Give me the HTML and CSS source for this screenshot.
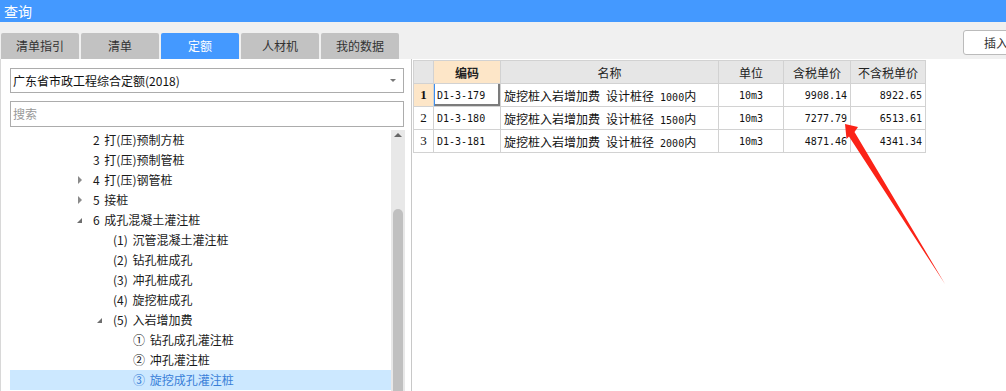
FILE: index.html
```html
<!DOCTYPE html>
<html>
<head>
	<title>查询</title>
	<meta charset="utf-8">
	<link rel="stylesheet" href="styles.css">
</head>
<body>
	<div class="titlebar">查询</div>
	<div class="main">
		<div class="left">
			<div class="tabs">
				<div class="tab">清单指引</div>
				<div class="tab">清单</div>
				<div class="tab on">定额</div>
				<div class="tab">人材机</div>
				<div class="tab">我的数据</div>
			</div>
			<div class="panel">
				<div class="select">广东省市政工程综合定额(2018)<i class="caret"></i></div>
				<div class="search">搜索</div>
				<div class="tree">
					<div class="list">
						<div class="node l1"><i class="tg"></i>2 打(压)预制方桩</div>
						<div class="node l1"><i class="tg"></i>3 打(压)预制管桩</div>
						<div class="node l1"><i class="tg closed"></i>4 打(压)钢管桩</div>
						<div class="node l1"><i class="tg closed"></i>5 接桩</div>
						<div class="node l1"><i class="tg open"></i>6 成孔混凝土灌注桩</div>
						<div class="node l2"><i class="tg"></i>(1) 沉管混凝土灌注桩</div>
						<div class="node l2"><i class="tg"></i>(2) 钻孔桩成孔</div>
						<div class="node l2"><i class="tg"></i>(3) 冲孔桩成孔</div>
						<div class="node l2"><i class="tg"></i>(4) 旋挖桩成孔</div>
						<div class="node l2"><i class="tg open"></i>(5) 入岩增加费</div>
						<div class="node l3"><i class="tg"></i>① 钻孔成孔灌注桩</div>
						<div class="node l3"><i class="tg"></i>② 冲孔灌注桩</div>
						<div class="node l3 sel"><i class="tg"></i>③ 旋挖成孔灌注桩</div>
					</div>
					<div class="scroll">
						<i class="up"></i>
						<div class="thumb"></div>
					</div>
				</div>
			</div>
		</div>
		<div class="right">
			<div class="toolbar">
				<div class="btn">插入</div>
			</div>
			<div class="content">
				<table class="grid">
					<colgroup>
						<col style="width:20px"><col style="width:67px"><col style="width:218px"><col style="width:65px"><col style="width:67px"><col style="width:75px">
					</colgroup>
					<tr class="head">
						<td></td>
						<td class="hot b">编码</td>
						<td>名称</td>
						<td>单位</td>
						<td>含税单价</td>
						<td>不含税单价</td>
					</tr>
					<tr>
						<td class="no hot b">1</td>
						<td class="code cur">D1-3-179</td>
						<td class="name">旋挖桩入岩增加费<span class="m">&nbsp;</span>设计桩径<span class="m">&nbsp;1000</span>内</td>
						<td class="unit m">10m3</td>
						<td class="num m">9908.14</td>
						<td class="num m">8922.65</td>
					</tr>
					<tr>
						<td class="no">2</td>
						<td class="code">D1-3-180</td>
						<td class="name">旋挖桩入岩增加费<span class="m">&nbsp;</span>设计桩径<span class="m">&nbsp;1500</span>内</td>
						<td class="unit m">10m3</td>
						<td class="num m">7277.79</td>
						<td class="num m">6513.61</td>
					</tr>
					<tr>
						<td class="no">3</td>
						<td class="code">D1-3-181</td>
						<td class="name">旋挖桩入岩增加费<span class="m">&nbsp;</span>设计桩径<span class="m">&nbsp;2000</span>内</td>
						<td class="unit m">10m3</td>
						<td class="num m">4871.46</td>
						<td class="num m">4341.34</td>
					</tr>
				</table>
			</div>
		</div>
	</div>
	<!-- 标注箭头 -->
	<svg class="arrow" width="1006" height="391" viewBox="0 0 1006 391">
		<polygon points="845,124 858,127 854.5,132 945,284 849,136.5 846.5,139" fill="#fb2317"/>
	</svg>
</body>
</html>
```

FILE: styles.css
```css
*{
	margin: 0;
	padding: 0;
	box-sizing: border-box;
}

body{
	width: 1006px;
	height: 391px;
	overflow: hidden;
	position: relative;
	background: #f0f0f0;
	font-family: "Noto Sans CJK SC", "Noto Sans", sans-serif;
	font-size: 12px;
	color: #222;
}

.titlebar{
	height: 22px;
	line-height: 22px;
	padding-left: 4px;
	background: #4499ff;
	color: #fff;
	font-size: 14px;
}

.main{
	display: flex;
	height: 369px;
}

/* 左侧 */
.left{
	width: 412px;
	display: flex;
	flex-direction: column;
}
.tabs{
	height: 37px;
	padding: 11px 0 0 1px;
	display: flex;
	gap: 2px;
}
.tab{
	width: 78px;
	height: 26px;
	line-height: 26px;
	text-align: center;
	background: #c2c2c2;
	border-radius: 2px 2px 0 0;
	color: #333;
}
.tab.on{
	background: #4499ff;
	color: #fff;
}
.panel{
	flex: 1;
	background: #fff;
	border-left: 1px solid #d8d8d8;
	border-right: 1px solid #c8c8c8;
	padding: 9px 6px 0 9px;
	display: flex;
	flex-direction: column;
	min-height: 0;
}
.select{
	position: relative;
	height: 25px;
	line-height: 23px;
	border: 1px solid #acacac;
	padding-left: 2px;
	width: 394px;
	color: #111;
}
.caret{
	position: absolute;
	right: 7px;
	top: 10px;
	border-top: 3px solid #777;
	border-left: 3px solid transparent;
	border-right: 3px solid transparent;
}
.search{
	margin-top: 8px;
	height: 26px;
	line-height: 24px;
	border: 1px solid #acacac;
	padding-left: 2px;
	width: 394px;
	color: #999;
}
.tree{
	margin-top: 3px;
	flex: 1;
	display: flex;
	width: 395px;
	min-height: 0;
}
.list{
	flex: 1;
}
.node{
	height: 20px;
	line-height: 20px;
	display: flex;
	align-items: center;
	white-space: pre;
	word-spacing: 2px;
	color: #1a1a1a;
}
.l1{ padding-left: 67px; }
.l2{ padding-left: 87px; }
.l3{ padding-left: 107px; }
.node.sel{
	background: #cce8ff;
	color: #3a7fd8;
}
.tg{
	width: 16px;
	height: 20px;
	position: relative;
}
.tg.closed:after{
	content: "";
	position: absolute;
	left: 1px;
	top: 6px;
	border-left: 4px solid #8a8a8a;
	border-top: 4px solid transparent;
	border-bottom: 4px solid transparent;
}
.tg.open:after{
	content: "";
	position: absolute;
	left: 0;
	top: 8px;
	border-right: 5px solid #6e6e6e;
	border-top: 5px solid transparent;
}
.scroll{
	width: 14px;
	background: #e8e8e8;
	position: relative;
	padding-top: 79px;
	display: flex;
	justify-content: center;
}
.up{
	position: absolute;
	left: 3px;
	top: 3px;
	border-bottom: 4px solid #666;
	border-left: 4px solid transparent;
	border-right: 4px solid transparent;
}
.thumb{
	width: 10px;
	background: #c0c0c0;
	border-radius: 5px 5px 0 0;
}

/* 右侧 */
.right{
	flex: 1;
	display: flex;
	flex-direction: column;
	min-width: 0;
}
.toolbar{
	height: 37px;
	padding-top: 8px;
	display: flex;
	justify-content: flex-end;
}
.btn{
	width: 64px;
	height: 25px;
	line-height: 23px;
	margin-right: -21px;
	padding-left: 20px;
	border: 1px solid #bbb;
	border-radius: 3px;
	background: #fff;
	color: #333;
}
.content{
	flex: 1;
	background: #fff;
	padding: 1px 0 0 1px;
}
.grid{
	border-collapse: collapse;
	table-layout: fixed;
	width: 512px;
}
.grid td{
	height: 23px;
	border: 1px solid #d2d2d2;
	padding: 0 3px;
	white-space: nowrap;
	overflow: hidden;
	color: #111;
}
.head td{
	background: #e6e6e6;
	text-align: center;
	color: #222;
}
.grid .hot{
	background: #fde6c8;
}
.b{
	font-weight: bold;
}
.m{
	font-family: "DejaVu Sans Mono", monospace;
	font-size: 10px;
}
.no{
	text-align: center;
	font-family: "Liberation Serif", serif;
	font-size: 13px;
	padding: 0 !important;
}
.code{
	font-family: "DejaVu Sans Mono", monospace;
	font-size: 10px;
}
.grid td.cur{
	box-shadow: inset 1px 0 0 #3d8ff0, inset -2px -2px 0 #7c7c7c;
}
.unit{
	text-align: center;
}
.num{
	text-align: right;
}

.arrow{
	position: absolute;
	left: 0;
	top: 0;
	pointer-events: none;
}
```
